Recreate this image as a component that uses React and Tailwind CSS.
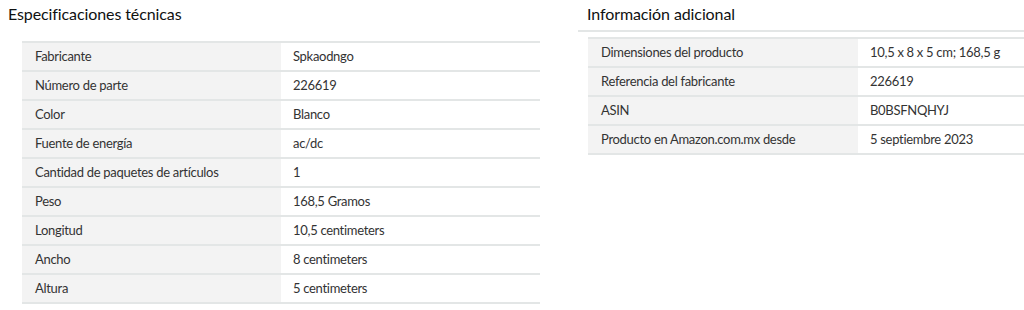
const tech = [
  ['Fabricante', 'Spkaodngo'],
  ['Número de parte', '226619'],
  ['Color', 'Blanco'],
  ['Fuente de energía', 'ac/dc'],
  ['Cantidad de paquetes de artículos', '1'],
  ['Peso', '168,5 Gramos'],
  ['Longitud', '10,5 centimeters'],
  ['Ancho', '8 centimeters'],
  ['Altura', '5 centimeters'],
]

const extra = [
  ['Dimensiones del producto', '10,5 x 8 x 5 cm; 168,5 g'],
  ['Referencia del fabricante', '226619'],
  ['ASIN', 'B0BSFNQHYJ'],
  ['Producto en Amazon.com.mx desde', '5 septiembre 2023'],
]

function Row({ label, value, labelW }) {
  return (
    <div className="flex h-[29px] border-b-2 border-[#e3e6e6] text-[13px] tracking-[-0.3px] text-[#333333]">
      <div className={`${labelW} shrink-0 bg-[#f3f3f3] pl-[13px] flex items-center`}>{label}</div>
      <div className="flex-1 pl-[12px] flex items-center">{value}</div>
    </div>
  )
}

export default function App() {
  return (
    <div className="w-[1024px] h-[310px] bg-white flex overflow-hidden" style={{ fontFamily: 'Lato, "Noto Sans", sans-serif' }}>
      {/* Especificaciones técnicas */}
      <section className="w-[578px] shrink-0">
        <h2 className="pl-2 pt-[2px] h-[41px] text-[16px] tracking-[-0.1px] text-[#0f1111]">Especificaciones técnicas</h2>
        <div className="ml-[22px] w-[518px] border-t-2 border-[#e3e6e6]">
          {tech.map(([l, v]) => (
            <Row key={l} label={l} value={v} labelW="w-[259px]" />
          ))}
        </div>
      </section>

      {/* Información adicional */}
      <section className="flex-1">
        <h2 className="pl-[9px] pt-[2px] h-[32px] border-b-2 border-[#e3e6e6] text-[16px] tracking-[-0.1px] text-[#0f1111]">Información adicional</h2>
        <div className="ml-[10px] mt-[5px] border-t-2 border-[#e3e6e6]">
          {extra.map(([l, v]) => (
            <Row key={l} label={l} value={v} labelW="w-[270px]" />
          ))}
        </div>
      </section>
    </div>
  )
}
